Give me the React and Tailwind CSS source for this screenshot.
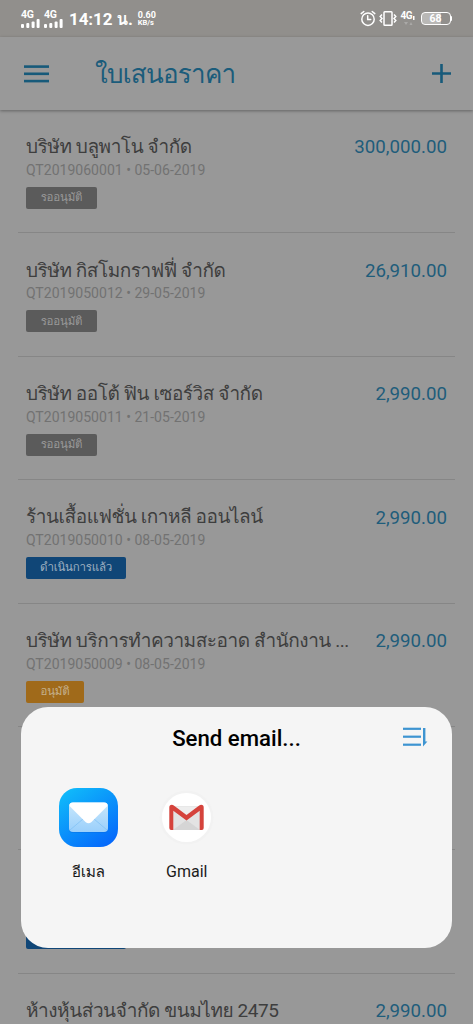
import React from 'react';

const quotes = [
  { id: 'QT2019060001', name: 'บริษัท บลูพาโน จำกัด', date: '05-06-2019', amount: '300,000.00', status: 'pending' },
  { id: 'QT2019050012', name: 'บริษัท กิสโมกราฟฟี่ จำกัด', date: '29-05-2019', amount: '26,910.00', status: 'pending' },
  { id: 'QT2019050011', name: 'บริษัท ออโต้ ฟิน เซอร์วิส จำกัด', date: '21-05-2019', amount: '2,990.00', status: 'pending' },
  { id: 'QT2019050010', name: 'ร้านเสื้อแฟชั่น เกาหลี ออนไลน์', date: '08-05-2019', amount: '2,990.00', status: 'done' },
  { id: 'QT2019050009', name: 'บริษัท บริการทำความสะอาด สำนักงาน ...', date: '08-05-2019', amount: '2,990.00', status: 'approved' },
  { status: 'hidden' },
  { status: 'covered' },
  { name: 'ห้างหุ้นส่วนจำกัด ขนมไทย 2475', amount: '2,990.00' },
];

const badges = {
  pending: { label: 'รออนุมัติ', className: 'w-[71px] bg-[#5b5b5b] text-[#999999]' },
  done: { label: 'ดำเนินการแล้ว', className: 'w-[100px] bg-[#104677] text-[#9fb0c0]' },
  approved: { label: 'อนุมัติ', className: 'w-[58px] bg-[#a06a1a] text-[#c4b08c]' },
};

function SignalBars() {
  return (
    <div className="w-[19px]">
      <div className="text-[10.5px] leading-[9px] font-bold tracking-[-0.3px]">4G</div>
      <svg width="19" height="9" viewBox="0 0 19 9" fill="white">
        <rect x="0" y="5" width="3" height="4" rx="1" />
        <rect x="5.3" y="4" width="3" height="5" rx="1" />
        <rect x="10.6" y="2.5" width="3" height="6.5" rx="1" />
        <rect x="15.6" y="0" width="3" height="9" rx="1" />
      </svg>
    </div>
  );
}

function StatusBar() {
  return (
    <div className="flex h-[37px] items-center justify-between bg-[#918f8c] pl-[21px] pr-[21px] text-white">
      <div className="flex items-center">
        <div className="flex gap-[4px]">
          <SignalBars />
          <SignalBars />
        </div>
        <span className="ml-[6px] text-[17px] font-bold leading-5 tracking-[-0.1px] whitespace-nowrap">14:12 น.</span>
        <div className="ml-[5px] text-[9px] font-bold leading-[8px]">
          <div>0.60</div>
          <div className="text-[7.5px]">KB/s</div>
        </div>
      </div>
      <div className="flex items-center">
        <svg width="16" height="17" viewBox="0 0 16 17" fill="none" stroke="white" strokeWidth="1.5" strokeLinecap="round">
          <circle cx="8" cy="9.2" r="6.2" />
          <path d="M7.7 5.8v3.8h3M1.2 3.6 3.8 1.5M14.8 3.6l-2.6-2.1" />
        </svg>
        <svg className="ml-[3px]" width="18" height="17" viewBox="0 0 18 17" fill="none" stroke="white" strokeWidth="1.5">
          <rect x="5" y="1.7" width="8" height="13.6" rx="0.8" />
          <path d="m3 4.5-1.8 2L3 8.5l-1.8 2 1.8 2M15 4.5l1.8 2-1.8 2 1.8 2-1.8 2" />
        </svg>
        <div className="ml-[4px] w-[16px]">
          <div className="flex items-end text-[10px] font-bold leading-[10px] tracking-[-0.4px]">
            4G
            <svg className="mb-[1px] ml-[1px]" width="2" height="4" viewBox="0 0 2 4" fill="white">
              <rect width="1.5" height="4" />
            </svg>
          </div>
          <svg width="16" height="6" viewBox="0 0 16 6" fill="#aaa9a7">
            <path d="M3 1h4L5 4zM8.5 4h3L10 1z" />
          </svg>
        </div>
        <div className="ml-[4px] flex items-center">
          <div className="flex h-[13px] w-[30px] items-center justify-center rounded-[4px] border border-white bg-linear-to-r from-[#b9b8b6] from-68% to-transparent to-68% pt-px text-[10.5px] font-bold leading-none">
            68
          </div>
          <div className="h-[5px] w-[1.5px] rounded-r bg-white" />
        </div>
      </div>
    </div>
  );
}

function Header() {
  return (
    <header className="relative flex h-[73px] items-center justify-between bg-[#999999] pl-[24px] pr-[22px] shadow-[0_1px_3px_rgba(0,0,0,0.35)]">
      <div className="flex items-center">
        <svg width="25" height="18" viewBox="0 0 25 18" fill="#175a7a">
          <rect y="0.3" width="25" height="2.6" />
          <rect y="7.5" width="25" height="2.6" />
          <rect y="14.8" width="25" height="2.6" />
        </svg>
        <h1 className="ml-[46px] pt-px text-[26px] leading-9 tracking-[-0.75px] text-[#1b5c7b] whitespace-nowrap">ใบเสนอราคา</h1>
      </div>
      <svg width="19" height="19" viewBox="0 0 19 19" stroke="#175a7a" strokeWidth="2.6">
        <path d="M9.5 0v19M0 9.5h19" />
      </svg>
    </header>
  );
}

function QuoteRow({ quote }) {
  const badge = badges[quote.status];

  return (
    <li className="mx-[18px] h-[123.4px] border-b border-[#868686] px-[8px] pt-[24px]">
      <div className="flex h-[27px] items-center justify-between whitespace-nowrap">
        <span className="text-[19px] tracking-[-0.45px] text-[#3e3e3e]">{quote.name}</span>
        <span className="text-[18.7px] text-[#1f5d7b]">{quote.amount}</span>
      </div>
      {quote.id && (
        <div className="h-[18px] text-[14.05px] leading-[18px] text-[#727272]">
          {quote.id} • {quote.date}
        </div>
      )}
      {badge && (
        <div className={`mt-[8px] flex h-[22px] items-center justify-center rounded-[2px] text-[11.5px] tracking-[-0.2px] leading-none whitespace-nowrap ${badge.className}`}>
          {badge.label}
        </div>
      )}
      {quote.status === 'covered' && <div className="mt-[26px] h-[22px] w-[100px] rounded-[2px] bg-[#104677]" />}
    </li>
  );
}

function MailIcon() {
  return (
    <svg width="59" height="59" viewBox="0 0 59 59">
      <defs>
        <linearGradient id="mailBg" x1="0.1" y1="0" x2="0.8" y2="1">
          <stop offset="0" stopColor="#10bdfa" />
          <stop offset="1" stopColor="#0568fb" />
        </linearGradient>
        <linearGradient id="mailBody" x1="0" y1="0" x2="0" y2="1">
          <stop offset="0" stopColor="#c8e8fc" />
          <stop offset="1" stopColor="#9acffb" />
        </linearGradient>
      </defs>
      <rect width="59" height="59" rx="18" fill="url(#mailBg)" />
      <rect x="10" y="16" width="39" height="29" rx="4" fill="#0869df" opacity="0.4" />
      <rect x="10" y="14.5" width="39" height="29.5" rx="4" fill="url(#mailBody)" />
      <path d="m11 42 13-11M48 42 35 31" stroke="#82c2f5" strokeWidth="0.8" />
      <path d="M14 14.5h31q4 0 3.5 3.5L32.5 34q-3 2.5-6 0L10.5 18q-.5-3.5 3.5-3.5Z" fill="white" />
    </svg>
  );
}

function GmailIcon() {
  return (
    <svg width="59" height="59" viewBox="0 0 59 59">
      <circle cx="29.5" cy="29.5" r="27" fill="#f2f2f2" />
      <circle cx="29.5" cy="29.5" r="24.5" fill="white" />
      <path d="M13 18h33v24H13z" fill="#e3e3e3" />
      <path d="M16 42 29.5 32 43 42z" fill="#d5d5d5" />
      <path d="M14.5 18.5h30L29.5 30z" fill="#eeeeee" />
      <path d="M12.3 19.5q0-2.7 2.5-2.7 1 0 2 .8l12.7 9.4 12.7-9.4q1-.8 2-.8 2.500 0 2.500 2.700V40q0 2-2 2h-2V22.700L29.500 32.500 16.300 22.700V42h-2q-2 0-2-2z" fill="#d5433c" />
    </svg>
  );
}

function ShareSheet() {
  return (
    <div className="absolute left-[21px] top-[707px] h-[241px] w-[431px] rounded-[27px] bg-[#f5f5f5]">
      <div className="flex flex-col pt-[18px]">
        <div className="relative flex h-[28px] items-center justify-center">
          <h2 className="text-[22.2px] font-medium text-black">Send email...</h2>
          <svg className="absolute right-[24px] top-[1px]" width="26" height="22" viewBox="0 0 26 22" fill="#3d94d1">
            <rect x="1" y="1.7" width="18" height="2.2" />
            <rect x="1" y="9.6" width="18" height="2.2" />
            <rect x="1" y="17.6" width="18" height="2.2" />
            <path d="M21 2h2.4v13.5h2L21 20.5z" />
          </svg>
        </div>
        <div className="mt-[35px] flex pl-[18px]">
          <div className="flex w-[98.5px] flex-col items-center">
            <MailIcon />
            <span className="mt-[13px] text-[15.5px] leading-6 tracking-[-0.3px] text-[#1c1c1c]">อีเมล</span>
          </div>
          <div className="flex w-[98.5px] flex-col items-center">
            <GmailIcon />
            <span className="mt-[13px] text-[16px] leading-6 text-[#1c1c1c]">Gmail</span>
          </div>
        </div>
      </div>
    </div>
  );
}

export default function App() {
  return (
    <div className="relative h-[1024px] w-[473px] overflow-hidden bg-[#989898] font-[Roboto,Loma,Waree,Garuda,Umpush,'Noto_Sans_Thai_Looped',sans-serif]">
      <StatusBar />
      <Header />
      <ul>
        {quotes.map((quote, i) => (
          <QuoteRow key={i} quote={quote} />
        ))}
      </ul>
      <ShareSheet />
    </div>
  );
}
